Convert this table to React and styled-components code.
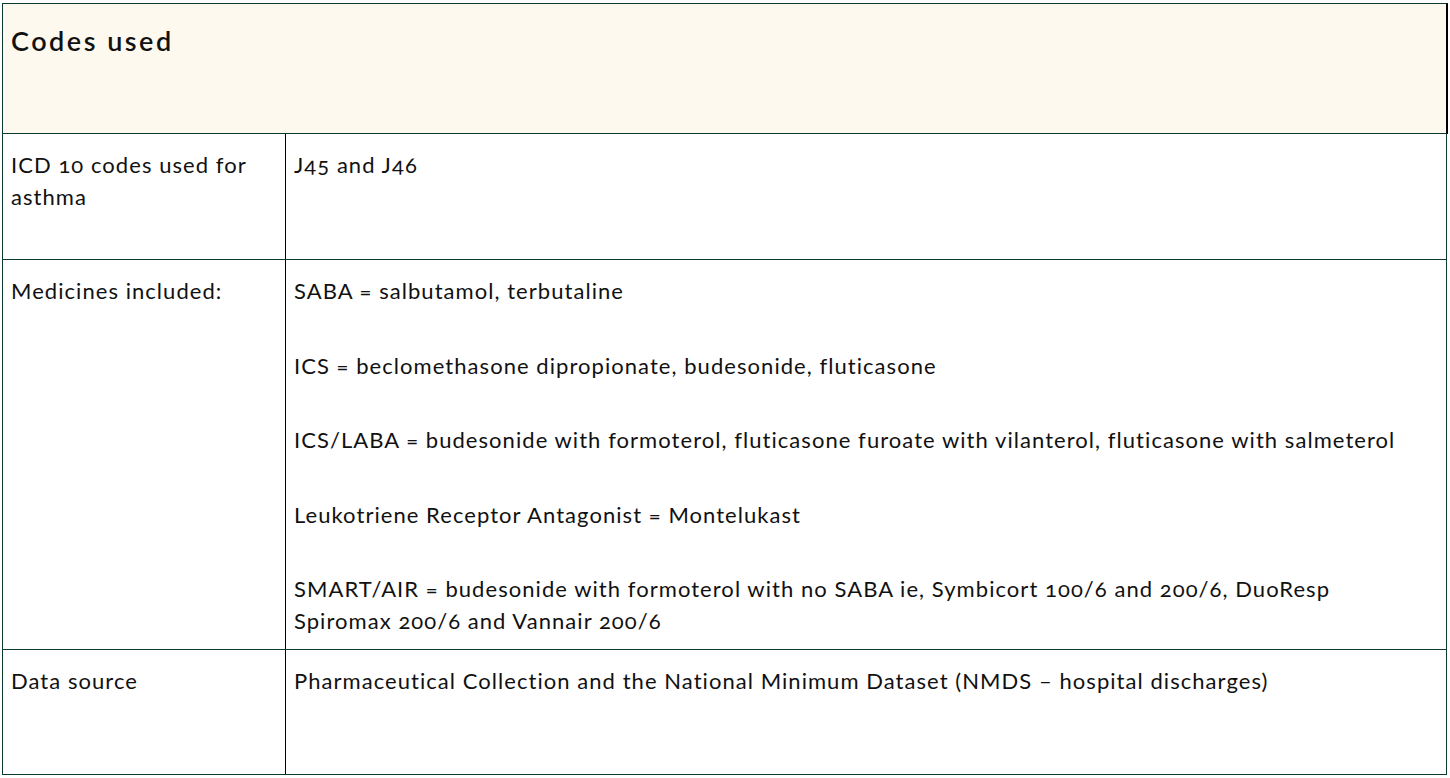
import React from "react";
import styled, { createGlobalStyle } from "styled-components";

const GREEN = "#0c3a30";
const INK = "#111111";

const Global = createGlobalStyle`
  html, body { margin: 0; padding: 0; background: #ffffff; }
  body {
    font-family: Lato, "Liberation Sans", Arial, sans-serif;
    font-feature-settings: "onum" 1;
    color: ${INK};
  }
`;

const Page = styled.div`
  padding: 3px 0 0 2px;
`;

const Table = styled.div`
  width: 1445px;
  display: flex;
  flex-direction: column;
`;

const Header = styled.div`
  box-sizing: border-box;
  width: 1446px;
  height: 131px;
  background: #fef9ef;
  border-top: 1px solid ${GREEN};
  border-left: 1px solid ${GREEN};
  border-bottom: 1px solid ${GREEN};
  border-right: 2px solid #000;
  padding: 19px 8px 0;
`;

const Title = styled.h2`
  margin: 0;
  font-size: 27px;
  line-height: 36px;
  font-weight: 600;
  letter-spacing: 2.5px;
`;

const Row = styled.div`
  box-sizing: border-box;
  display: grid;
  grid-template-columns: 283px 1fr;
  min-height: ${(p) => p.$h}px;
  border-left: 1px solid ${GREEN};
  border-right: 1px solid ${GREEN};
  border-bottom: 1px solid ${GREEN};
`;

const Cell = styled.div`
  box-sizing: border-box;
  padding: 15px 40px 12px 8px;
  font-size: 22px;
  line-height: 32px;
  letter-spacing: 1.05px;
`;

const LabelCell = styled(Cell)`
  border-right: 1px solid #000;
  padding-right: 20px;
`;

const Para = styled.p`
  margin: 0 0 42.5px;
  &:last-child { margin-bottom: 0; }
`;

const rows = [
  { label: "ICD 10 codes used for asthma", h: 126, paras: ["J45 and J46"] },
  {
    label: "Medicines included:",
    h: 390,
    paras: [
      "SABA = salbutamol, terbutaline",
      "ICS = beclomethasone dipropionate, budesonide, fluticasone",
      "ICS/LABA = budesonide with formoterol, fluticasone furoate with vilanterol, fluticasone with salmeterol",
      "Leukotriene Receptor Antagonist = Montelukast",
      "SMART/AIR = budesonide with formoterol with no SABA ie, Symbicort 100/6 and 200/6, DuoResp Spiromax 200/6 and Vannair 200/6",
    ],
  },
  {
    label: "Data source",
    h: 125,
    paras: [
      "Pharmaceutical Collection and the National Minimum Dataset (NMDS \u2013 hospital discharges)",
    ],
  },
];

export default function App() {
  return (
    <Page>
      <Global />
      <Table>
        <Header>
          <Title>Codes used</Title>
        </Header>
        {rows.map((r) => (
          <Row key={r.label} $h={r.h}>
            <LabelCell>{r.label}</LabelCell>
            <Cell>
              {r.paras.map((p) => (
                <Para key={p}>{p}</Para>
              ))}
            </Cell>
          </Row>
        ))}
      </Table>
    </Page>
  );
}
